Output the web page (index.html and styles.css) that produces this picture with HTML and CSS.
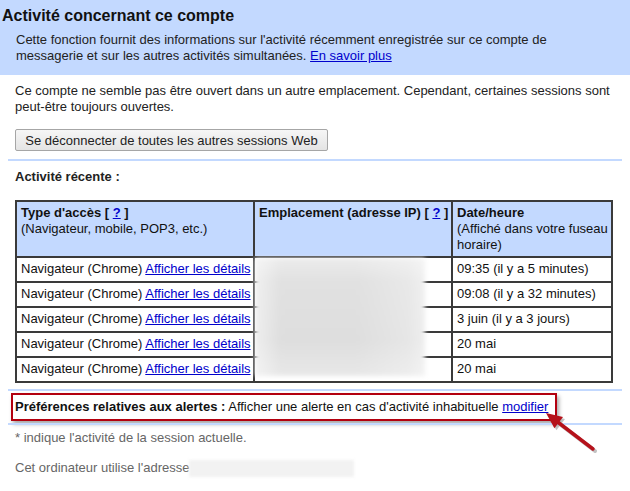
FILE: index.html
```html
<!DOCTYPE html>
<html lang="fr">
<head>
<meta charset="utf-8">
<title>Activité concernant ce compte</title>
<link rel="stylesheet" href="styles.css">
</head>
<body>
<div class="page">
  <div class="header">
    <h1 class="title">Activité concernant ce compte</h1>
    <p class="intro">Cette fonction fournit des informations sur l'activité récemment enregistrée sur ce compte de messagerie et sur les autres activités simultanées. <a href="#" class="link">En savoir plus</a></p>
  </div>

  <p class="status">Ce compte ne semble pas être ouvert dans un autre emplacement. Cependant, certaines sessions sont peut-être toujours ouvertes.</p>

  <div class="button-row"><button class="btn">Se déconnecter de toutes les autres sessions Web</button></div>

  <div class="sep sep-top"></div>

  <div class="section-title">Activité récente :</div>

  <div class="table-wrap">
    <table class="activity">
      <tr class="head">
        <td class="c1"><b>Type d'accès [ <a href="#" class="link">?</a> ]</b><br>(Navigateur, mobile, POP3, etc.)</td>
        <td class="c2"><b class="nowrap">Emplacement (adresse IP) [ <a href="#" class="link">?</a> ]</b></td>
        <td class="c3"><b>Date/heure</b><br>(Affiché dans votre fuseau horaire)</td>
      </tr>
      <tr>
        <td>Navigateur (Chrome) <a href="#" class="link">Afficher les détails</a></td>
        <td></td>
        <td>09:35 (il y a 5 minutes)</td>
      </tr>
      <tr>
        <td>Navigateur (Chrome) <a href="#" class="link">Afficher les détails</a></td>
        <td></td>
        <td>09:08 (il y a 32 minutes)</td>
      </tr>
      <tr>
        <td>Navigateur (Chrome) <a href="#" class="link">Afficher les détails</a></td>
        <td></td>
        <td>3 juin (il y a 3 jours)</td>
      </tr>
      <tr>
        <td>Navigateur (Chrome) <a href="#" class="link">Afficher les détails</a></td>
        <td></td>
        <td>20 mai</td>
      </tr>
      <tr>
        <td>Navigateur (Chrome) <a href="#" class="link">Afficher les détails</a></td>
        <td></td>
        <td>20 mai</td>
      </tr>
    </table>
    <div class="ip-blur"></div>
  </div>

  <div class="sep sep-mid"></div>

  <div class="alert-box"><b>Préférences relatives aux alertes :</b> Afficher une alerte en cas d'activité inhabituelle <a href="#" class="link">modifier</a></div>

  <div class="sep sep-low"></div>

  <p class="note">* indique l'activité de la session actuelle.</p>
  <p class="note note-ip">Cet ordinateur utilise l'adresse<span class="addr-blur"></span></p>

  <svg class="arrow" width="70" height="52" viewBox="0 0 70 52" aria-hidden="true">
    <g transform="translate(2,2)" opacity="0.35">
      <line x1="17" y1="13.5" x2="53" y2="41" stroke="#555" stroke-width="4" stroke-linecap="round"/>
      <polygon points="6,5 14.4,20.3 23,9.1" fill="#555"/>
    </g>
    <line x1="17" y1="13.5" x2="53" y2="41" stroke="#b5121b" stroke-width="3.5" stroke-linecap="round"/>
    <polygon points="6,5 14.4,20.3 23,9.1" fill="#b5121b"/>
  </svg>
</div>
</body>
</html>
```

FILE: styles.css
```css
html, body {
  margin: 0;
  padding: 0;
  background: #fff;
}

body {
  font-family: "Liberation Sans", Arial, sans-serif;
  font-size: 13px;
  line-height: 16px;
  color: #222;
}

.page {
  position: relative;
  width: 630px;
  height: 491px;
  overflow: hidden;
}

.link {
  color: #0000cc;
  text-decoration: underline;
}

.nowrap {
  white-space: nowrap;
}

.header {
  background: #c3d9ff;
  height: 75px;
  box-sizing: border-box;
  padding-top: 6px;
}

.title {
  margin: 0;
  padding-left: 2px;
  font-size: 16px;
  line-height: 20px;
  font-weight: bold;
  color: #111;
}

.intro {
  margin: 6px 0 0 16px;
  width: 560px;
  line-height: 16px;
  color: #222;
}

.status {
  margin: 8px 0 0 15px;
  width: 600px;
}

.button-row {
  margin: 14px 0 0 15px;
}

.btn {
  display: block;
  width: 313px;
  height: 22px;
  padding: 0;
  font-family: "Liberation Sans", Arial, sans-serif;
  font-size: 13px;
  color: #222;
  background: linear-gradient(#f6f6f6, #e4e4e4);
  border: 1px solid #a6a6a6;
  border-radius: 2px;
}

.sep {
  margin-left: 8px;
  width: 614px;
  height: 2px;
  background: #c3d9ff;
}

.sep-top { margin-top: 8px; }
.sep-mid { margin-top: 6px; }
.sep-low { margin-top: 2px; }

.section-title {
  margin: 8px 0 0 15px;
  font-weight: bold;
}

.table-wrap {
  position: relative;
  margin: 15px 0 0 15px;
  width: 598px;
}

.activity {
  width: 598px;
  table-layout: fixed;
  border-collapse: separate;
  border-spacing: 0;
  border: 1px solid #3a3a3a;
}

.activity td {
  box-sizing: border-box;
  border: 1px solid #3a3a3a;
  padding: 3px 3px 3px 4px;
  vertical-align: top;
  height: 25px;
  white-space: nowrap;
  color: #111;
}

.activity .head td {
  background: #c3d9ff;
  white-space: normal;
  height: 55px;
  padding-top: 3px;
  padding-right: 2px;
}

.activity .c1 { width: 238px; }
.activity .c2 { width: 198px; }
.activity .c3 { width: 160px; }

.ip-blur {
  position: absolute;
  left: 240px;
  top: 58px;
  width: 170px;
  height: 118px;
  background:
    linear-gradient(90deg, rgba(255,255,255,0.5) 0%, rgba(255,255,255,0) 15%, rgba(0,0,0,0) 60%, rgba(255,255,255,0.25) 90%, rgba(255,255,255,0.5) 100%),
    linear-gradient(180deg, #ececec 0%, #e1e1e1 20%, #dedede 70%, #e8e8e8 100%);
  filter: blur(2px);
}

.alert-box {
  margin: 2px 0 0 11px;
  width: 546px;
  height: 28px;
  box-sizing: border-box;
  border: 2px solid #b3000f;
  padding: 4px 0 0 2px;
  box-shadow: 2px 3px 4px rgba(0, 0, 0, 0.35);
  color: #111;
  white-space: nowrap;
}

.note {
  margin: 5px 0 0 15px;
  color: #666;
}

.note-ip {
  margin-top: 14px;
}

.addr-blur {
  display: inline-block;
  vertical-align: middle;
  width: 165px;
  height: 17px;
  margin-left: 0;
  background: #f2f2f2;
  filter: blur(1.5px);
}

.arrow {
  position: absolute;
  left: 540px;
  top: 408px;
}
```
